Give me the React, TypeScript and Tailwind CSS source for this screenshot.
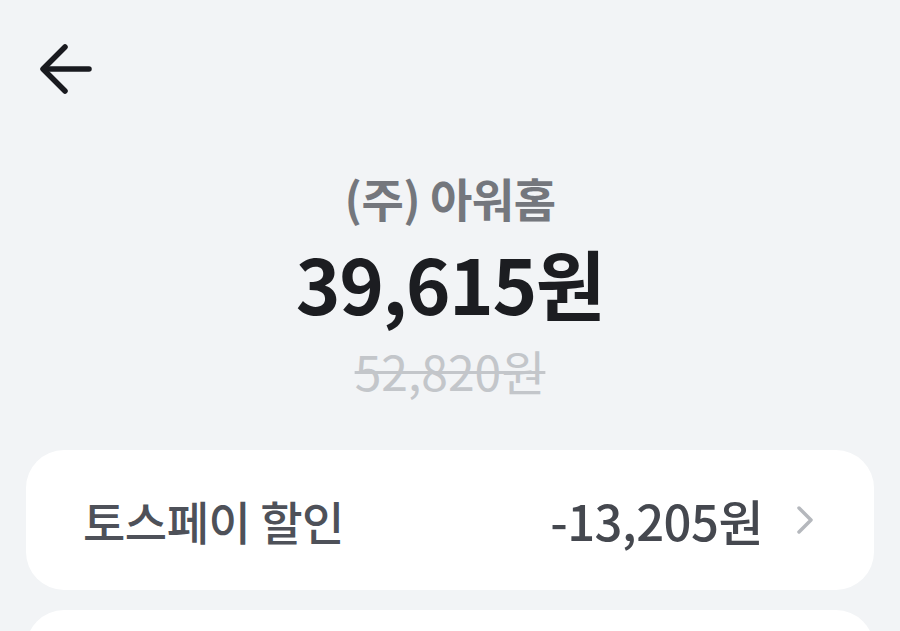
const ArrowLeft = () => (
  <svg width="52" height="52" viewBox="0 0 52 52" fill="none" stroke="#191a1f" strokeWidth="5.5" strokeLinecap="round" strokeLinejoin="round">
    <path d="M49 25H4" />
    <path d="M25 3L3 25l22 22" />
  </svg>
);

const Chevron = () => (
  <svg width="20" height="30" viewBox="0 0 20 30" fill="none" stroke="#b5b8bd" strokeWidth="3.5" strokeLinecap="round" strokeLinejoin="round">
    <path d="M4 3l12 12L4 27" />
  </svg>
);

export default function App() {
  return (
    <div
      className="w-[900px] h-[631px] overflow-hidden bg-[#f2f4f6]"
      style={{ fontFamily: '"Noto Sans CJK KR", "Noto Sans", sans-serif' }}
    >
      <div className="h-[169px] pl-[40px] pt-[44px]">
        <ArrowLeft />
      </div>

      <div className="flex flex-col items-center">
        <div className="text-[46px] leading-[56px] font-semibold text-[#74777d] tracking-[-0.5px]">(주) 아워홈</div>
        <div className="mt-[15px] text-[76px] leading-[84px] font-bold text-[#1c1d21] tracking-[-1.5px]">39,615원</div>
        <div className="mt-[20px] text-[48px] leading-[52px] text-[#c3c6ca] line-through decoration-[3px]">52,820원</div>
      </div>

      <div className="mt-[54px] mx-[26px] flex flex-col gap-[20px]">
        <div className="h-[140px] shrink-0 bg-white rounded-[38px] flex items-center pl-[57px] pr-[59px]">
          <span className="text-[46px] font-medium text-[#4e5159] tracking-[-0.5px]">토스페이 할인</span>
          <span className="ml-auto text-[49px] font-medium text-[#45484f] tracking-[-0.5px]">-13,205원</span>
          <span className="ml-[32px] flex items-center"><Chevron /></span>
        </div>
        <div className="h-[140px] shrink-0 bg-white rounded-[38px]" />
      </div>
    </div>
  );
}
